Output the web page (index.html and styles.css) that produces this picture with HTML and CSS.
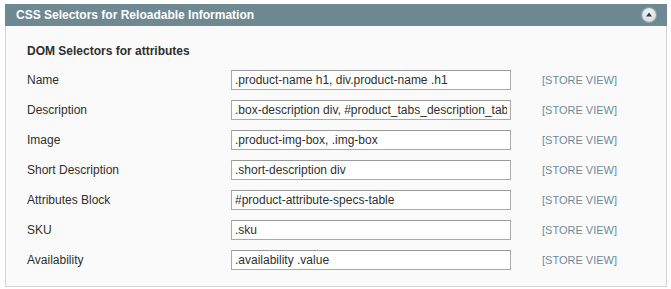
FILE: index.html
```html
<!DOCTYPE html>
<html lang="en">
<head>
  <meta charset="UTF-8">
  <title>CSS Selectors for Reloadable Information</title>
  <link rel="stylesheet" href="styles.css">
</head>
<body>

  <div class="section">
    <div class="section-head">
      <span class="section-title">CSS Selectors for Reloadable Information</span>
      <span class="collapse-btn">
        <svg width="14" height="14" viewBox="0 0 14 14">
          <path d="M7 4.5 L10 8.5 L4 8.5 Z" fill="#2b3d48"/>
        </svg>
      </span>
    </div>

    <div class="section-body">
      <h4>DOM Selectors for attributes</h4>

      <div class="form-grid">
        <label for="name">Name</label>
        <input type="text" id="name" value=".product-name h1, div.product-name .h1">
        <span class="scope">[STORE VIEW]</span>

        <label for="description">Description</label>
        <input type="text" id="description" value=".box-description div, #product_tabs_description_tabbed_contents">
        <span class="scope">[STORE VIEW]</span>

        <label for="image">Image</label>
        <input type="text" id="image" value=".product-img-box, .img-box">
        <span class="scope">[STORE VIEW]</span>

        <label for="short">Short Description</label>
        <input type="text" id="short" value=".short-description div">
        <span class="scope">[STORE VIEW]</span>

        <label for="attributes">Attributes Block</label>
        <input type="text" id="attributes" value="#product-attribute-specs-table">
        <span class="scope">[STORE VIEW]</span>

        <label for="sku">SKU</label>
        <input type="text" id="sku" value=".sku">
        <span class="scope">[STORE VIEW]</span>

        <label for="availability">Availability</label>
        <input type="text" id="availability" value=".availability .value">
        <span class="scope">[STORE VIEW]</span>
      </div>
    </div>
  </div>

</body>
</html>
```

FILE: styles.css
```css
/* Page */
body {
  margin: 0;
  padding: 4px 0 0 5px;
  font-family: "Liberation Sans", Arial, sans-serif;
  font-size: 12px;
  color: #2f2f2f;
  background: #fff;
}

.section {
  width: 662px;
}

/* Collapsible header bar */
.section-head {
  height: 22px;
  background: #6f8992;
  display: flex;
  align-items: center;
  justify-content: space-between;
  padding: 0 11px 0 11px;
}

.section-title {
  color: #fff;
  font-weight: bold;
  font-size: 12px;
}

.collapse-btn {
  width: 14px;
  height: 14px;
  border-radius: 50%;
  background: radial-gradient(circle at 50% 35%, #f4f6f6 0%, #d9dfe0 70%, #b9c4c7 100%);
  box-shadow: 0 0 0 1px #8ea1a7;
  display: flex;
}

/* Body */
.section-body {
  background: #fafafa;
  border: 1px solid #d6d6d6;
  border-top: none;
  padding: 18px 21px 16px 21px;
}

.section-body h4 {
  margin: 0 0 11px 0;
  font-size: 12px;
  font-weight: bold;
  color: #2f2f2f;
  line-height: 15px;
}

.form-grid {
  display: grid;
  grid-template-columns: 173px 280px auto;
  column-gap: 31px;
  row-gap: 10px;
  align-items: center;
}

.form-grid label {
  font-size: 12px;
  color: #2f2f2f;
}

.form-grid input {
  width: 280px;
  height: 20px;
  box-sizing: border-box;
  border: 1px solid #aaa;
  border-top-color: #999;
  background: #fff;
  padding: 0 3px;
  margin: 0;
  font-family: "Liberation Sans", Arial, sans-serif;
  font-size: 12px;
  color: #2f2f2f;
}

.scope {
  font-size: 11px;
  color: #6f8a9c;
  white-space: nowrap;
}
```
